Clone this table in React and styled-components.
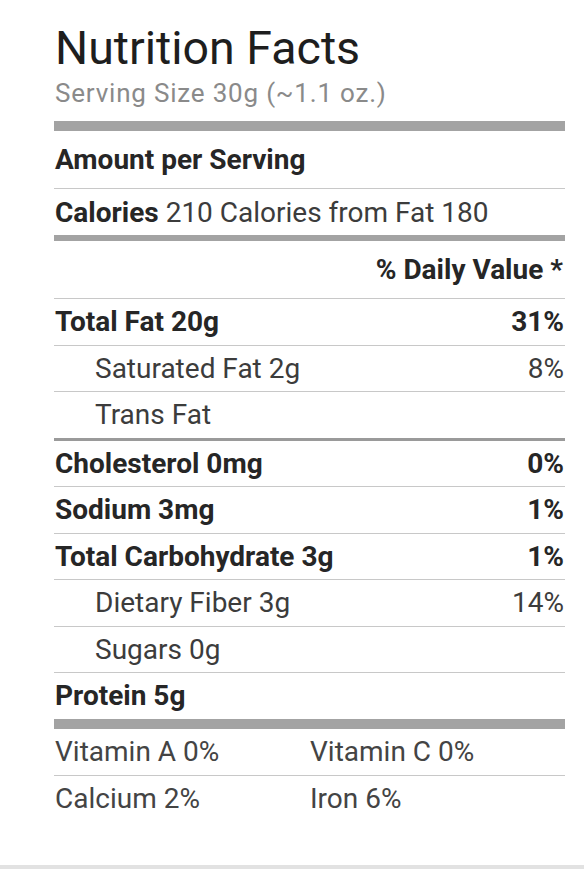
import React from 'react';
import styled, { createGlobalStyle } from 'styled-components';

const GlobalStyle = createGlobalStyle`
    body {
        margin: 0;
        background: #fff;
        font-family: Roboto, "Liberation Sans", sans-serif;
    }
`

const Page = styled.div`
    padding: 22px 0 43px;
    border-bottom: 4px solid #e2e2e2;
`
const Label = styled.section`
    width: 511px;
    margin-left: 54px;
`
const Title = styled.h1`
    margin: 0;
    font-size: 46.5px;
    line-height: 52px;
    font-weight: 400;
    color: #1e1e1e;
    padding-left: 1px;
`
const Serving = styled.div`
    font-size: 26px;
    line-height: 38px;
    color: #8a8a8a;
    letter-spacing: 0.8px;
    padding-left: 1px;
    margin-bottom: 9px;
`
const Bar = styled.div`
    height: ${props => props.size}px;
    background: #a3a3a3;
`
const Row = styled.div`
    display: flex;
    align-items: center;
    justify-content: space-between;
    height: ${props => props.h || 45.5}px;
    padding-left: ${props => props.indent ? 41 : 1}px;
    border-bottom: ${props => props.line === 'thick' ? '3px solid #9a9a9a' : props.line === 'none' ? 'none' : '1px solid #c8c8c8'};
    font-size: 28px;
    color: #3a3a3a;
`
const Name = styled.span`
    font-weight: ${props => props.bold ? 700 : 400};
    color: ${props => props.bold ? '#262626' : '#3c3c3c'};
`
const Regular = styled.span`
    font-weight: 400;
    color: #3c3c3c;
`
const Percent = styled.span`
    font-weight: ${props => props.bold ? 700 : 400};
    color: ${props => props.bold ? '#262626' : '#3c3c3c'};
    padding-right: 1px;
`
const Daily = styled.span`
    margin-left: auto;
    font-weight: 700;
    color: #262626;
    padding-right: 2px;
`
const Pair = styled.div`
    display: grid;
    grid-template-columns: 1fr 1fr;
    align-items: center;
    height: 46px;
    padding-left: 1px;
    border-bottom: ${props => props.last ? 'none' : '1px solid #c8c8c8'};
    font-size: 28px;
    color: #444;
`

const nutrients = [
    { name: 'Total Fat 20g', pct: '31%', bold: true },
    { name: 'Saturated Fat 2g', pct: '8%', indent: true },
    { name: 'Trans Fat', indent: true, line: 'thick' },
    { name: 'Cholesterol 0mg', pct: '0%', bold: true },
    { name: 'Sodium 3mg', pct: '1%', bold: true },
    { name: 'Total Carbohydrate 3g', pct: '1%', bold: true },
    { name: 'Dietary Fiber 3g', pct: '14%', indent: true },
    { name: 'Sugars 0g', indent: true },
    { name: 'Protein 5g', bold: true, line: 'none' },
];

const App = () => {
    return (
        <Page>
            <GlobalStyle />
            <Label>
                <Title>Nutrition Facts</Title>
                <Serving>Serving Size 30g (~1.1 oz.)</Serving>
                <Bar size={10} />
                <Row h={57}>
                    <Name bold>Amount per Serving</Name>
                </Row>
                <Row h={46} line="none">
                    <span>
                        <Name bold>Calories</Name> <Regular>210 Calories from Fat 180</Regular>
                    </span>
                </Row>
                <Bar size={6} />
                <Row h={57}>
                    <Daily>% Daily Value *</Daily>
                </Row>
                {nutrients.map(n => (
                    <Row key={n.name} indent={n.indent} line={n.line}>
                        <Name bold={n.bold}>{n.name}</Name>
                        {n.pct && <Percent bold={n.bold}>{n.pct}</Percent>}
                    </Row>
                ))}
                <Bar size={10} />
                <Pair>
                    <span>Vitamin A 0%</span>
                    <span>Vitamin C 0%</span>
                </Pair>
                <Pair last>
                    <span>Calcium 2%</span>
                    <span>Iron 6%</span>
                </Pair>
            </Label>
        </Page>
    );
};

export default App;
